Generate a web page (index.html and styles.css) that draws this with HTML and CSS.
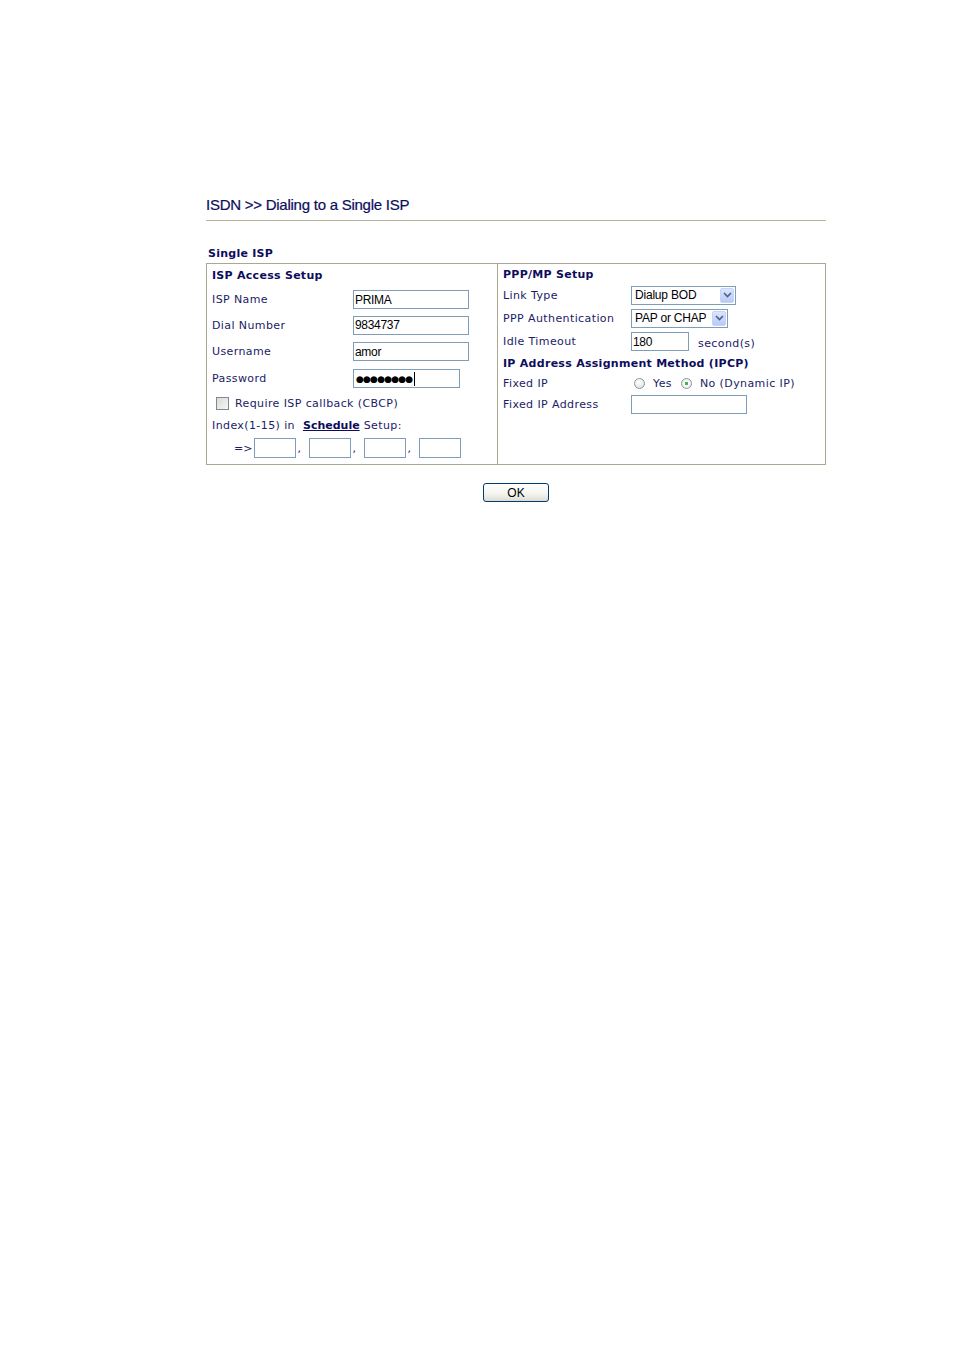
FILE: index.html
```html
<!DOCTYPE html>
<html>
<head>
<meta charset="utf-8">
<title>ISDN &gt;&gt; Dialing to a Single ISP</title>
<link rel="stylesheet" href="styles.css">
</head>
<body>
<div class="page">
  <h1 class="title">ISDN &gt;&gt; Dialing to a Single ISP</h1>
  <div class="rule"></div>
  <div class="section-title">Single ISP</div>
  <div class="panel">
    <div class="col col-left">
      <div class="row r-head"><span class="head">ISP Access Setup</span></div>
      <div class="row r-isp"><span class="label">ISP Name</span><span class="field w116">PRIMA</span></div>
      <div class="row r-dial"><span class="label">Dial Number</span><span class="field w116">9834737</span></div>
      <div class="row r-user"><span class="label">Username</span><span class="field w116">amor</span></div>
      <div class="row r-pass"><span class="label">Password</span><span class="field w107 pass">&#9679;&#9679;&#9679;&#9679;&#9679;&#9679;&#9679;&#9679;<span class="caret"></span></span></div>
      <div class="row r-check"><span class="checkbox"></span><span class="text">Require ISP callback (CBCP)</span></div>
      <div class="row r-index"><span class="text">Index(1-15) in</span><a class="link" href="#">Schedule</a><span class="text">Setup:</span></div>
      <div class="row r-sched">
        <span class="text arrow">=&gt;</span>
        <span class="field w42"></span><span class="comma">,</span>
        <span class="field w42"></span><span class="comma">,</span>
        <span class="field w42"></span><span class="comma">,</span>
        <span class="field w42"></span>
      </div>
    </div>
    <div class="col col-right">
      <div class="row q-head"><span class="head">PPP/MP Setup</span></div>
      <div class="row q-link"><span class="label rlabel">Link Type</span>
        <span class="select w105"><span class="sel-text">Dialup BOD</span><span class="sel-btn"><svg width="9" height="6" viewBox="0 0 9 6"><path d="M1 1 L4.5 4.5 L8 1" fill="none" stroke="#4d6185" stroke-width="1.6"/></svg></span></span>
      </div>
      <div class="row q-auth"><span class="label rlabel">PPP Authentication</span>
        <span class="select w97"><span class="sel-text">PAP or CHAP</span><span class="sel-btn"><svg width="9" height="6" viewBox="0 0 9 6"><path d="M1 1 L4.5 4.5 L8 1" fill="none" stroke="#4d6185" stroke-width="1.6"/></svg></span></span>
      </div>
      <div class="row q-idle"><span class="label rlabel">Idle Timeout</span><span class="field w58">180</span><span class="text unit">second(s)</span></div>
      <div class="row q-ipcp"><span class="head">IP Address Assignment Method (IPCP)</span></div>
      <div class="row q-fixed"><span class="label rlabel">Fixed IP</span>
        <span class="radio"></span><span class="text rtext">Yes</span>
        <span class="radio checked"></span><span class="text rtext">No (Dynamic IP)</span>
      </div>
      <div class="row q-addr"><span class="label rlabel">Fixed IP Address</span><span class="field w116"></span></div>
    </div>
  </div>
  <div class="actions"><button class="btn" type="button">OK</button></div>
</div>
</body>
</html>
```

FILE: styles.css
```css
html, body {
  margin: 0;
  padding: 0;
  background: #ffffff;
}

.page {
  width: 620px;
  margin-left: 206px;
  padding-top: 195px;
  font-family: "DejaVu Sans", Verdana, sans-serif;
  font-size: 11px;
  letter-spacing: 0.4px;
  color: #1b1b66;
}

.title {
  margin: 0;
  height: 20px;
  line-height: 20px;
  font-family: "Liberation Sans", Arial, sans-serif;
  font-size: 15px;
  font-weight: normal;
  color: #0d0d5c;
  letter-spacing: -0.25px;
  -webkit-text-stroke: 0.2px #0d0d5c;
}

.rule {
  margin-top: 5px;
  border-top: 1px solid #b7b59f;
}

.section-title {
  margin-top: 26px;
  margin-left: 2px;
  height: 13px;
  line-height: 13px;
  font-weight: bold;
  letter-spacing: 0.25px;
  color: #0d0d5c;
}

.panel {
  margin-top: 3px;
  display: flex;
  height: 202px;
  box-sizing: border-box;
  border: 1px solid #aaa893;
}

.col {
  display: flex;
  flex-direction: column;
}

.col-left {
  width: 291px;
  border-right: 1px solid #aaa893;
  padding-left: 5px;
  box-sizing: border-box;
}

.col-right {
  flex: 1;
  padding-left: 5px;
}

.row {
  display: flex;
  align-items: center;
  white-space: nowrap;
}

.head {
  font-weight: bold;
  letter-spacing: 0.28px;
  color: #0d0d5c;
}

.label {
  width: 141px;
  flex: none;
}

.rlabel {
  width: 128px;
}

/* left column rows */
.r-head { height: 23px; }
.r-isp { height: 25px; }
.r-dial { height: 26px; }
.r-user { height: 27px; }
.r-pass { height: 27px; }
.r-check { height: 23px; }
.r-index { height: 20px; }
.r-sched { height: 26px; }

/* right column rows */
.q-head { height: 20px; }
.q-link { height: 22px; }
.q-auth { height: 24px; }
.q-idle { height: 23px; }
.q-ipcp { height: 20px; }
.q-fixed { height: 20px; }
.q-addr { height: 23px; }

.field {
  display: inline-flex;
  align-items: center;
  height: 19px;
  box-sizing: border-box;
  border: 1px solid #7f9db9;
  background: #ffffff;
  padding: 0 1px;
  font-family: "Liberation Sans", Arial, sans-serif;
  font-size: 12px;
  color: #000000;
  letter-spacing: -0.3px;
}

.w116 { width: 116px; }
.w107 { width: 107px; }
.w58 { width: 58px; }
.w42 { width: 42px; height: 20px; }

.pass {
  font-family: "DejaVu Sans", sans-serif;
  font-size: 9px;
  letter-spacing: -0.8px;
  padding-left: 2px;
}

.caret {
  display: inline-block;
  width: 1px;
  height: 14px;
  background: #000000;
  margin-left: 2px;
}

.checkbox {
  width: 11px;
  height: 11px;
  margin-left: 4px;
  margin-right: 6px;
  border: 1px solid #7a8a99;
  background: linear-gradient(135deg, #dcdcd4 0%, #f6f6f3 100%);
}

.link {
  margin-left: 8px;
  margin-right: 4px;
  font-weight: bold;
  letter-spacing: 0;
  color: #0d0d5c;
  text-decoration: underline;
}

.arrow {
  margin-left: 22px;
  margin-right: 2px;
  letter-spacing: 0;
}

.comma {
  width: 13px;
  padding-left: 1px;
  box-sizing: border-box;
  align-self: flex-end;
  margin-bottom: 6px;
}

.select {
  display: inline-flex;
  align-items: center;
  justify-content: space-between;
  box-sizing: border-box;
  border: 1px solid #7f9db9;
  background: #ffffff;
  font-family: "Liberation Sans", Arial, sans-serif;
  font-size: 12px;
  color: #000000;
  padding: 1px 1px 1px 3px;
  letter-spacing: -0.2px;
}

.w105 { width: 105px; height: 19px; }
.w97 { width: 97px; height: 19px; }

.sel-btn {
  display: inline-flex;
  align-items: center;
  justify-content: center;
  width: 14px;
  height: 15px;
  box-sizing: border-box;
  border: 1px solid #c3d3fd;
  border-radius: 2px;
  background: linear-gradient(180deg, #dae5fd 0%, #b8cbf6 100%);
}

.unit {
  margin-left: 9px;
  margin-top: 3px;
}

.radio {
  width: 11px;
  height: 11px;
  border-radius: 50%;
  box-sizing: border-box;
  border: 1px solid #8896a4;
  background: radial-gradient(circle at 40% 35%, #ffffff 0%, #e2e2dc 80%);
  margin-left: 3px;
  margin-right: 8px;
}

.radio.checked {
  margin-left: 9px;
  background: radial-gradient(circle, #33b333 0%, #44bb44 22%, #ffffff 32%, #e2e2dc 90%);
}

.actions {
  margin-top: 18px;
  display: flex;
  justify-content: center;
}

.btn {
  width: 66px;
  height: 19px;
  padding: 0;
  box-sizing: border-box;
  border: 1px solid #003c74;
  border-radius: 3px;
  background: linear-gradient(180deg, #ffffff 0%, #f3f3ef 60%, #dcdcd2 100%);
  font-family: "Liberation Sans", Arial, sans-serif;
  font-size: 12px;
  color: #000000;
  line-height: 16px;
}
```
